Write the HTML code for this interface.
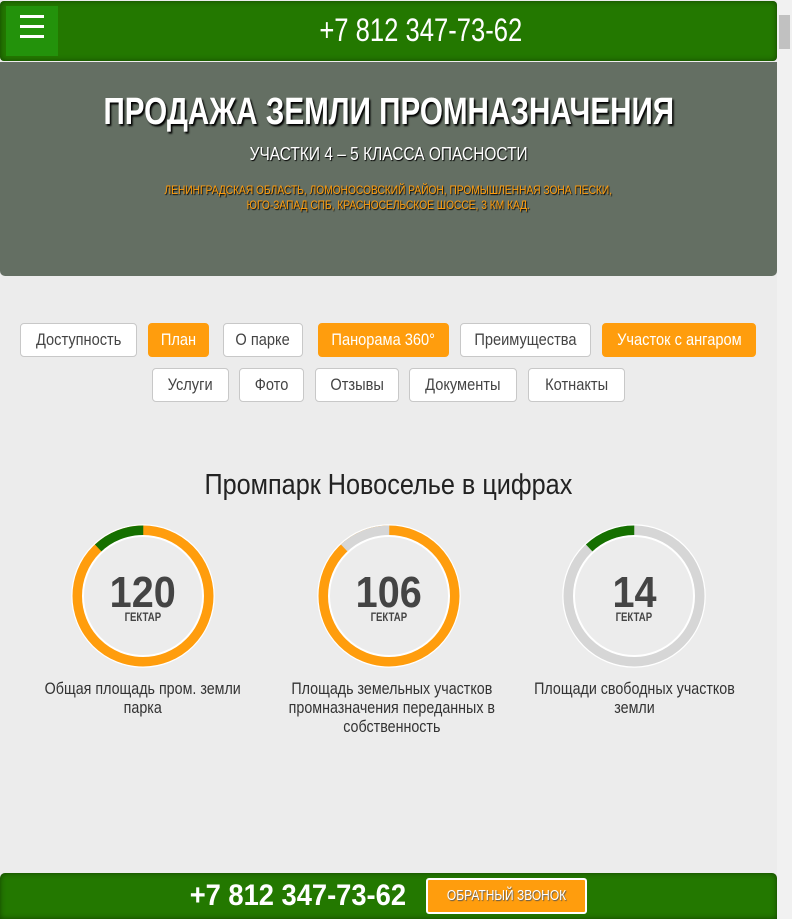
<!DOCTYPE html>
<html><head><meta charset="utf-8"><style>
*{margin:0;padding:0;box-sizing:border-box}
body{width:792px;height:919px;overflow:hidden;background:#ececec;font-family:"Liberation Sans",sans-serif;position:relative}
.n{display:inline-block;transform:scaleX(.8);transform-origin:center;white-space:nowrap}
.abs{position:absolute}
#hdr{left:0;top:1px;width:777px;height:60px;background:#237800;border-radius:4px;box-shadow:inset 0 0 6px rgba(0,0,0,.45)}
#menu{left:6px;top:6px;width:52px;height:50px;background:#23920b}
#menu i{position:absolute;left:14px;width:24px;height:3px;background:#fff}
#hero{left:0;top:62px;width:777px;height:214px;background:#646f63;border-radius:0 0 5px 5px}
.c{text-align:center;left:0;width:777px}
.btn{position:absolute;height:34px;border:1px solid #c8c8c8;border-radius:4px;background:#fff;color:#444;font-size:17px;line-height:32px;text-align:center}
.btn .n{transform:scaleX(.86)}
.o{background:#ff9d0d;border-color:#ff9d0d;color:#fff}
#bot{left:0;top:873px;width:777px;height:46px;background:#237800;border-radius:5px 5px 0 0;box-shadow:inset 0 0 6px rgba(0,0,0,.45)}
#sb{left:777px;top:0;width:15px;height:919px;background:#f1f1f1}
.cap{font-size:17px;color:#333;line-height:19px;text-align:center;width:240px}
.cap .n{transform:scaleX(.84)}
.num{font-size:44px;font-weight:bold;color:#444;text-align:center;width:140px}
.num .n{transform:scaleX(.9)}
.g{font-size:12px;font-weight:bold;color:#444;text-align:center;width:140px}
</style></head><body>
<div id="hdr" class="abs"></div>
<div id="menu" class="abs"><i style="top:9px"></i><i style="top:19px"></i><i style="top:29px"></i></div>
<div class="abs c" style="top:12px;color:#fff;font-size:32px;line-height:36px;left:32px"><span class="n">+7 812 347-73-62</span></div>
<div id="hero" class="abs"></div>
<div class="abs c" style="top:92px;color:#fff;font-size:38px;font-weight:bold;line-height:40px;text-shadow:2px 2px 2px #000"><span class="n" style="transform:scaleX(.78)">ПРОДАЖА ЗЕМЛИ ПРОМНАЗНАЧЕНИЯ</span></div>
<div class="abs c" style="top:144px;color:#fff;font-size:18px;line-height:20px;text-shadow:1px 1px 1px #000"><span class="n" style="transform:scaleX(.86)">УЧАСТКИ 4 – 5 КЛАССА ОПАСНОСТИ</span></div>
<div class="abs c" style="top:183px;color:#ff9d0d;font-size:12px;line-height:15px;text-shadow:1px 1px 1px #000"><span class="n" style="transform:scaleX(.85)">ЛЕНИНГРАДСКАЯ ОБЛАСТЬ, ЛОМОНОСОВСКИЙ РАЙОН, ПРОМЫШЛЕННАЯ ЗОНА ПЕСКИ,<br>ЮГО-ЗАПАД СПБ, КРАСНОСЕЛЬСКОЕ ШОССЕ, 3 КМ КАД.</span></div>

<div class="btn" style="left:20px;top:323px;width:117px"><span class="n">Доступность</span></div>
<div class="btn o" style="left:148px;top:323px;width:61px"><span class="n">План</span></div>
<div class="btn" style="left:223px;top:323px;width:80px"><span class="n">О парке</span></div>
<div class="btn o" style="left:318px;top:323px;width:131px"><span class="n">Панорама 360°</span></div>
<div class="btn" style="left:460px;top:323px;width:131px"><span class="n">Преимущества</span></div>
<div class="btn o" style="left:602px;top:323px;width:154px"><span class="n">Участок с ангаром</span></div>
<div class="btn" style="left:152px;top:368px;width:77px"><span class="n">Услуги</span></div>
<div class="btn" style="left:239px;top:368px;width:65px"><span class="n">Фото</span></div>
<div class="btn" style="left:315px;top:368px;width:84px"><span class="n">Отзывы</span></div>
<div class="btn" style="left:409px;top:368px;width:108px"><span class="n">Документы</span></div>
<div class="btn" style="left:528px;top:368px;width:97px"><span class="n">Котнакты</span></div>

<div class="abs c" style="top:468px;font-size:29px;color:#222;line-height:34px"><span class="n" style="transform:scaleX(.87)">Промпарк Новоселье в цифрах</span></div>

<svg class="abs" style="left:0;top:0" width="777" height="919">
<g transform="translate(143,596)">
<circle r="71" fill="none" stroke="#fff" stroke-width="1.5"/><circle r="65.5" fill="none" stroke="#ff9d0d" stroke-width="10"/>
<circle r="65.5" fill="none" stroke="#157000" stroke-width="10" stroke-dasharray="49.4 400" transform="rotate(-133)"/>
<circle r="60" fill="none" stroke="#fff" stroke-width="2"/></g>
<g transform="translate(389,596)">
<circle r="71" fill="none" stroke="#fff" stroke-width="1.5"/><circle r="65.5" fill="none" stroke="#ff9d0d" stroke-width="10"/>
<circle r="65.5" fill="none" stroke="#d6d6d6" stroke-width="10" stroke-dasharray="49.4 400" transform="rotate(-133)"/>
<circle r="60" fill="none" stroke="#fff" stroke-width="2"/></g>
<g transform="translate(634,596)">
<circle r="71" fill="none" stroke="#fff" stroke-width="1.5"/><circle r="65.5" fill="none" stroke="#d6d6d6" stroke-width="10"/>
<circle r="65.5" fill="none" stroke="#157000" stroke-width="10" stroke-dasharray="49.4 400" transform="rotate(-133)"/>
<circle r="60" fill="none" stroke="#fff" stroke-width="2"/></g>
</svg>
<div class="abs num" style="left:73px;top:568px"><span class="n">120</span></div>
<div class="abs g" style="left:73px;top:610px"><span class="n">ГЕКТАР</span></div>
<div class="abs num" style="left:319px;top:568px"><span class="n">106</span></div>
<div class="abs g" style="left:319px;top:610px"><span class="n">ГЕКТАР</span></div>
<div class="abs num" style="left:564px;top:568px"><span class="n">14</span></div>
<div class="abs g" style="left:564px;top:610px"><span class="n">ГЕКТАР</span></div>
<div class="abs cap" style="left:23px;top:679px"><span class="n">Общая площадь пром. земли<br>парка</span></div>
<div class="abs cap" style="left:269px;top:679px"><span class="n">Площадь земельных участков<br>промназначения переданных в<br>собственность</span></div>
<div class="abs cap" style="left:514px;top:679px"><span class="n">Площади свободных участков<br>земли</span></div>

<div id="bot" class="abs"></div>
<div class="abs" style="left:164px;top:879px;width:268px;text-align:center;color:#fff;font-size:30px;font-weight:bold;line-height:34px"><span class="n" style="transform:scaleX(.91)">+7 812 347-73-62</span></div>
<div class="abs" style="left:426px;top:878px;width:161px;height:36px;background:#ff9d0d;border:2px solid #fff;border-radius:3px;color:#fff;font-size:15px;line-height:32px;text-align:center;text-shadow:1px 1px 1px #555"><span class="n">ОБРАТНЫЙ ЗВОНОК</span></div>

<div id="sb" class="abs"><div style="position:absolute;left:2px;top:15px;width:11px;height:34px;background:#c1c1c1"></div></div>
</body></html>
